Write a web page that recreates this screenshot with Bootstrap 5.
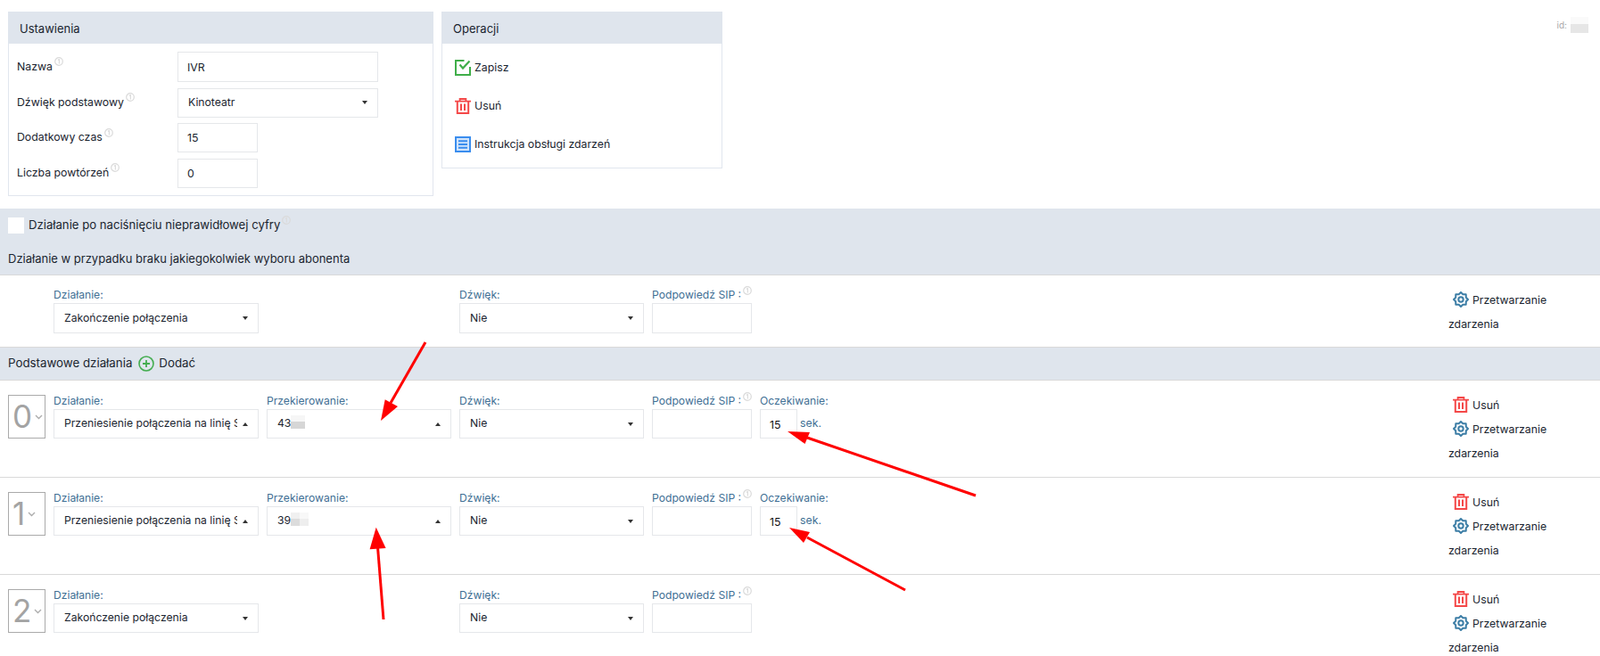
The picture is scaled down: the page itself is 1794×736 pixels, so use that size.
<!DOCTYPE html>
<html lang="pl">
<head>
<meta charset="utf-8">
<title>IVR</title>
<link href="https://cdn.jsdelivr.net/npm/bootstrap@5.3.0/dist/css/bootstrap.min.css" rel="stylesheet">
<style>
html,body{height:736px;overflow:hidden}
body{margin:0;position:relative;font-family:"Inter","Liberation Sans",sans-serif;font-size:12.3px;color:#1b2530;background:#fff}
.top-zone{height:234px;padding:13px 13px 0 9px;gap:9px}
.panel{border:1px solid #e1e6ee;border-radius:0;background:#fff;--bs-card-border-radius:0}
.panel-set{width:477px;height:207px}
.panel-ops{width:315px;height:176px}
.panel .card-header{height:36px;background:#dfe5ed;border:0;border-radius:0!important;padding:0 13px;margin:-1px -1px 0;line-height:38px;font-size:13px}
.set-body{padding:9px 61px 0 9px;gap:6.5px;display:flex;flex-direction:column}
.set-line{display:flex;align-items:center}
.set-line>label{width:180px;flex:none}
.ctl{height:33px;border:1px solid #e5e7ea;border-radius:0;font-size:12.3px;color:#1b2530;padding:0 10px;box-shadow:none;background:#fff}
.ctl-first{height:34px}
.ctl-short{width:90px}
.pick{display:flex;align-items:center;height:33px;border:1px solid #e5e7ea;border-radius:0;font-size:12.2px;color:#1b2530;padding:0 12px 0 11px;background:#fff none;width:100%}
.pick-text{flex:1;overflow:hidden;white-space:nowrap;min-width:0;display:flex;align-items:center}
.tri{width:0;height:0;border-left:3.5px solid transparent;border-right:3.5px solid transparent;border-top:4px solid #333;margin-left:6px;margin-right:-1px;flex:none}
.tri-up{border-top:0;border-bottom:4px solid #333}
.info{width:10px;height:10px;display:inline-block;margin-left:2px;transform:translateY(-6px);vertical-align:middle}
.ops-body{padding:5.5px 14px;display:flex;flex-direction:column}
.op{height:43px;display:flex;align-items:center;gap:4px;margin-top:0}
.op svg{width:18px;height:18px;flex:none}
.id-tag{margin-left:auto;margin-top:6px;font-size:10px;color:#a8a8a8;line-height:19px;height:19px}
.shade{background:#dfe5ed;border-bottom:1px solid #d9d9d9}
.shade-a{height:75px;padding:9px 9px 0;font-size:13.15px}
.shade-a-low{font-size:13px;margin-top:18px}
.tick{width:18px;height:18px;background:#fff;flex:none;margin-right:5px}
.shade-b{height:37px;padding:0 9px;gap:5px;font-size:13.3px}
.shade-b svg{width:18px;height:18px;margin-left:2px}
.entry{border-bottom:1px solid #d9d9d9;height:109px;padding:14px 0 0 9px;display:flex}
.entry-first{height:81px;padding-top:13px}
.entry-first .pick,.entry-first .ctl{height:34px}
.numbox{width:42px;height:49px;border:1px solid #aaa;margin:2px 9px 0 0;flex:none;color:#a3a3a3;font-size:35px;font-weight:400;line-height:47px;padding-left:4px;display:flex;align-items:center;gap:3px}
.numbox svg{width:9px;height:6px;flex:none}
.no-box{width:51px;flex:none}
.fld{margin-right:9px;flex:none}
.fld-act{width:230px}.fld-red{width:207px}.fld-snd{width:207px}.fld-sip{width:112px}.fld-wait{width:150px;margin-right:0}
.fld-gap{width:216px;flex:none}
.fld>label{display:block;height:18px;line-height:18px;color:#3f6f94;margin:0;white-space:nowrap;font-size:12.15px}
.fld .ctl{width:100%}
.wait-wrap{display:flex;align-items:center;gap:3px;color:#3f6f94}
.wait-wrap .ctl{width:42px;padding:2px 0 0 10px;color:#111}
.act-col{margin-left:auto;width:170px;flex:none;line-height:27px}
.entry-first .act-col{padding-top:1px}
.act-col svg{margin:0 4px 0 5px;vertical-align:-4px}
.blurb{display:inline-grid;grid-template-rows:8px 8px;margin-top:-4px}
.blurb-id{margin-top:0}
.blurb i{display:block}
.notes{position:absolute;left:0;top:0;pointer-events:none}
.defs{position:absolute}
</style>
</head>
<body>
<svg width="0" height="0" class="defs">
<defs>
<symbol id="i-info" viewBox="0 0 10 10"><circle cx="5" cy="5" r="4.3" fill="none" stroke="#dadada" stroke-width="1.2"/><path d="M3.8 3.2 5.4 2.8V7.6" fill="none" stroke="#dcdcdc" stroke-width="1.2"/></symbol>
<symbol id="i-trash" viewBox="0 0 18 18"><g fill="none" stroke="#f44848" stroke-width="2"><path d="M0 3.6H18M5.6 3.6V1H12.4V3.6" stroke-width="1.8"/><path d="M2.8 3.6V17H15.2V3.6"/><path d="M7 6.4V14M11 6.4V14"/></g></symbol>
<symbol id="i-gear" viewBox="0 0 18 18"><g fill="none" stroke="#3d7ea6" stroke-width="2" stroke-linejoin="round"><polygon points="9,1 11.3,3.2 14.7,3.3 14.8,6.7 17,9 14.8,11.3 14.7,14.7 11.3,14.8 9,17 6.7,14.8 3.3,14.7 3.2,11.3 1,9 3.2,6.7 3.3,3.3 6.7,3.2"/><circle cx="9" cy="9" r="2.7"/></g></symbol>
</defs>
</svg>

<div class="d-flex align-items-start top-zone">
  <div class="card panel panel-set">
    <div class="card-header">Ustawienia</div>
    <div class="set-body">
      <div class="set-line"><label>Nazwa<svg class="info"><use href="#i-info"/></svg></label><input class="form-control ctl ctl-first" value="IVR"></div>
      <div class="set-line"><label>Dźwięk podstawowy<svg class="info"><use href="#i-info"/></svg></label><div class="form-select pick"><span class="pick-text">Kinoteatr</span><span class="tri"></span></div></div>
      <div class="set-line"><label>Dodatkowy czas<svg class="info"><use href="#i-info"/></svg></label><input class="form-control ctl ctl-short" value="15"></div>
      <div class="set-line"><label>Liczba powtórzeń<svg class="info"><use href="#i-info"/></svg></label><input class="form-control ctl ctl-short" value="0"></div>
    </div>
  </div>
  <div class="card panel panel-ops">
    <div class="card-header">Operacji</div>
    <div class="ops-body">
      <div class="op"><svg viewBox="0 0 18 18"><path d="M10.5 1H1V17H17V8" fill="none" stroke="#3fae49" stroke-width="2"/><path d="M5.5 5.5 9 9.5 16.5 1.5" fill="none" stroke="#3fae49" stroke-width="2.2"/></svg>Zapisz</div>
      <div class="op"><svg><use href="#i-trash"/></svg>Usuń</div>
      <div class="op"><svg viewBox="0 0 18 18"><rect width="18" height="18" fill="#3a8dee"/><rect x="2" y="2" width="14" height="14" fill="#cfe3fb"/><path d="M4 5.2H14M4 9H14M4 12.8H14" stroke="#3a8dee" stroke-width="2"/></svg>Instrukcja obsługi zdarzeń</div>
    </div>
  </div>
  <div class="id-tag d-flex">id:<span class="blurb blurb-id ms-1"><i style="width:20px;height:9px;background:#fafafa"></i><i style="width:20px;height:10px;background:#e6e6e6"></i></span></div>
</div>

<div class="shade shade-a">
  <div class="d-flex align-items-center"><span class="tick"></span><span>Działanie po naciśnięciu nieprawidłowej cyfry<svg class="info"><use href="#i-info"/></svg></span></div>
  <div class="shade-a-low">Działanie w przypadku braku jakiegokolwiek wyboru abonenta</div>
</div>

<div class="entry entry-first">
  <div class="no-box"></div>
  <div class="fld fld-act"><label>Działanie:</label><div class="form-select pick"><span class="pick-text">Zakończenie połączenia</span><span class="tri"></span></div></div>
  <div class="fld-gap"></div>
  <div class="fld fld-snd"><label>Dźwięk:</label><div class="form-select pick"><span class="pick-text">Nie</span><span class="tri"></span></div></div>
  <div class="fld fld-sip"><label>Podpowiedź SIP :<svg class="info"><use href="#i-info"/></svg></label><input class="form-control ctl"></div>
  <div class="act-col"><div><svg width="18" height="18"><use href="#i-gear"/></svg>Przetwarzanie zdarzenia</div></div>
</div>

<div class="shade shade-b d-flex align-items-center">Podstawowe działania
  <svg viewBox="0 0 18 18"><circle cx="9" cy="9" r="8" fill="none" stroke="#44ad50" stroke-width="1.6"/><path d="M9 5V13M5 9H13" stroke="#44ad50" stroke-width="1.8"/></svg>Dodać</div>

<div class="entry">
  <div class="numbox">0<svg viewBox="0 0 9 6"><path d="M1 1 4.5 4.5 8 1" fill="none" stroke="#adadad" stroke-width="1.4"/></svg></div>
  <div class="fld fld-act"><label>Działanie:</label><div class="form-select pick"><span class="pick-text">Przeniesienie połączenia na linię S</span><span class="tri tri-up"></span></div></div>
  <div class="fld fld-red"><label>Przekierowanie:</label><div class="form-select pick"><span class="pick-text">43<span class="blurb"><i style="width:16px;background:#f6f6f6"></i><i style="width:16px;background:#d6d6d6"></i></span></span><span class="tri tri-up"></span></div></div>
  <div class="fld fld-snd"><label>Dźwięk:</label><div class="form-select pick"><span class="pick-text">Nie</span><span class="tri"></span></div></div>
  <div class="fld fld-sip"><label>Podpowiedź SIP :<svg class="info"><use href="#i-info"/></svg></label><input class="form-control ctl"></div>
  <div class="fld fld-wait"><label>Oczekiwanie:</label><div class="wait-wrap"><input class="form-control ctl" value="15"><span>sek.</span></div></div>
  <div class="act-col"><div><svg width="18" height="18"><use href="#i-trash"/></svg>Usuń</div><div><svg width="18" height="18"><use href="#i-gear"/></svg>Przetwarzanie zdarzenia</div></div>
</div>

<div class="entry">
  <div class="numbox">1<svg viewBox="0 0 9 6"><path d="M1 1 4.5 4.5 8 1" fill="none" stroke="#adadad" stroke-width="1.4"/></svg></div>
  <div class="fld fld-act"><label>Działanie:</label><div class="form-select pick"><span class="pick-text">Przeniesienie połączenia na linię S</span><span class="tri tri-up"></span></div></div>
  <div class="fld fld-red"><label>Przekierowanie:</label><div class="form-select pick"><span class="pick-text">39<span class="blurb"><i style="width:20px;background:linear-gradient(90deg,#f0f0f0 50%,#f8f8f8 50%)"></i><i style="width:20px;background:linear-gradient(90deg,#dcdcdc 50%,#eeeeee 50%)"></i></span></span><span class="tri tri-up"></span></div></div>
  <div class="fld fld-snd"><label>Dźwięk:</label><div class="form-select pick"><span class="pick-text">Nie</span><span class="tri"></span></div></div>
  <div class="fld fld-sip"><label>Podpowiedź SIP :<svg class="info"><use href="#i-info"/></svg></label><input class="form-control ctl"></div>
  <div class="fld fld-wait"><label>Oczekiwanie:</label><div class="wait-wrap"><input class="form-control ctl" value="15"><span>sek.</span></div></div>
  <div class="act-col"><div><svg width="18" height="18"><use href="#i-trash"/></svg>Usuń</div><div><svg width="18" height="18"><use href="#i-gear"/></svg>Przetwarzanie zdarzenia</div></div>
</div>

<div class="entry">
  <div class="numbox">2<svg viewBox="0 0 9 6"><path d="M1 1 4.5 4.5 8 1" fill="none" stroke="#adadad" stroke-width="1.4"/></svg></div>
  <div class="fld fld-act"><label>Działanie:</label><div class="form-select pick"><span class="pick-text">Zakończenie połączenia</span><span class="tri"></span></div></div>
  <div class="fld-gap"></div>
  <div class="fld fld-snd"><label>Dźwięk:</label><div class="form-select pick"><span class="pick-text">Nie</span><span class="tri"></span></div></div>
  <div class="fld fld-sip"><label>Podpowiedź SIP :<svg class="info"><use href="#i-info"/></svg></label><input class="form-control ctl"></div>
  <div class="act-col"><div><svg width="18" height="18"><use href="#i-trash"/></svg>Usuń</div><div><svg width="18" height="18"><use href="#i-gear"/></svg>Przetwarzanie zdarzenia</div></div>
</div>

<svg class="notes" width="1794" height="736" viewBox="0 0 1794 736">
  <g fill="#f00" stroke="#f00" stroke-width="3">
    <path d="M477 384 438 452" fill="none"/><polygon stroke="none" points="427,472 431.7,448.3 446,456"/>
    <path d="M1094 556 905 491" fill="none"/><polygon stroke="none" points="883,484 908,485 902.5,498"/>
    <path d="M430 695 423.6 615" fill="none"/><polygon stroke="none" points="421.7,591.7 414.6,616.3 432.6,614.9"/>
    <path d="M1015 662 905 603" fill="none"/><polygon stroke="none" points="885,592 908,597 901,609"/>
  </g>
</svg>
<script src="https://cdn.jsdelivr.net/npm/bootstrap@5.3.0/dist/js/bootstrap.bundle.min.js"></script>
</body>
</html>
